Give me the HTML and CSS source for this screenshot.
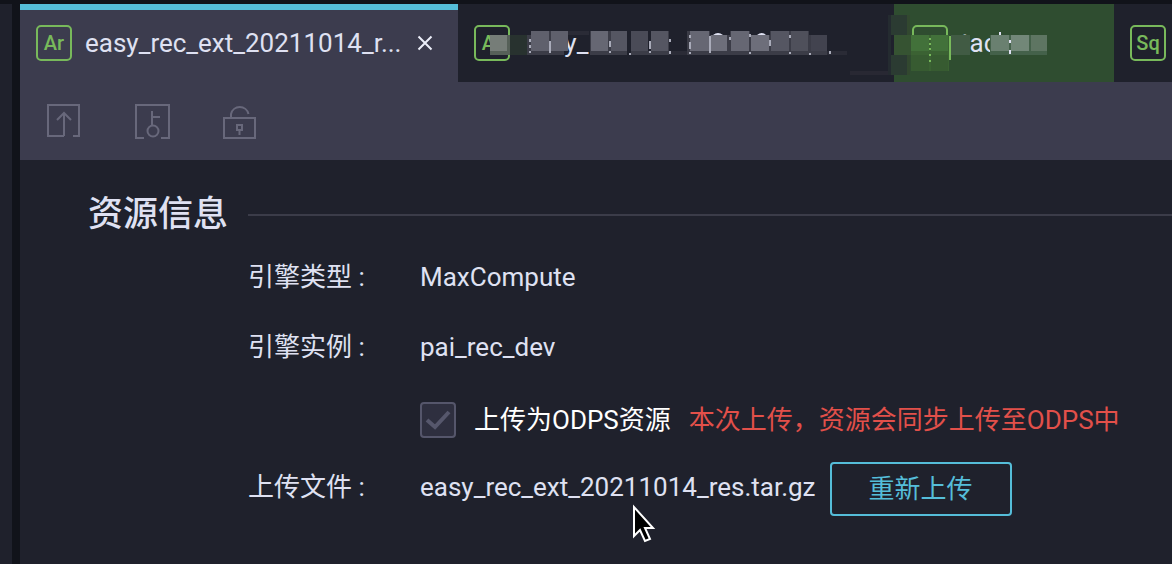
FILE: index.html
```html
<!DOCTYPE html>
<html lang="zh-CN">
<head>
<meta charset="utf-8">
<meta name="viewport" content="width=device-width, initial-scale=1">
<title>资源信息</title>
<link rel="stylesheet" href="styles.css">
</head>
<body class="app">
<aside class="rail"></aside>
<main class="workspace">
  <nav class="tabs" aria-label="文件">
    <div class="tab tab-active">
      <span class="badge">Ar</span>
      <span class="tab-name">easy_rec_ext_20211014_r...</span>
      <button class="close" type="button" aria-label="关闭">
        <svg width="16" height="16" viewBox="0 0 16 16"><path d="M1.5 1.5l13 13M14.5 1.5l-13 13"/></svg>
      </button>
    </div>
    <div class="tab tab-wide">
      <span class="badge">Ar</span>
      <span class="tab-name">easy_</span>
    </div>
    <div class="tab tab-green">
      <span class="badge"></span>
      <span class="tab-name">tac</span>
    </div>
    <div class="tab tab-last"><span class="badge">Sq</span></div>
    <svg class="mosaic" width="600" height="78" viewBox="458 4 600 78" shape-rendering="crispEdges" aria-hidden="true">
      <path fill="#767d78" d="M490 35h17v16h-17z"/>
      <path fill="#566058" d="M507 35h3v20h-3zM490 51h17v4h-17z"/>
      <path fill="#28322f" d="M510 35h17v20h-17z"/>
      <path fill="#1f212c" d="M523 31h40v4h-40zM527 35h36v24h-36z"/>
      <path fill="#3b3c47" d="M527 35h4v20h-4zM531 51h33v4h-33zM549 31h2v20h-2z"/>
      <path fill="#5f606c" d="M531 31h18v20h-18zM551 31h17v20h-17z"/>
      <path fill="#2a2b36" d="M568 31h21v4h-21zM669 51h19v4h-19zM827 51h20v4h-20z"/>
      <path fill="#3b3c47" d="M590 31h37v24h-37zM631 31h16v24h-16zM647 51h4v4h-4zM651 31h18v24h-18zM687 31h23v24h-23zM710 35h20v20h-20zM730 31h20v24h-20zM750 35h20v20h-20zM770 31h39v24h-39zM809 35h18v20h-18z"/>
      <path fill="#666773" d="M591 31h17v20h-17zM690 31h19v20h-19zM731 31h18v20h-18z"/>
      <path fill="#555662" d="M611 31h16v20h-16zM651 31h17v20h-17zM771 31h18v20h-18z"/>
      <path fill="#4a4b57" d="M631 31h17v20h-17z"/>
      <path fill="#42434f" d="M811 35h16v16h-16z"/>
      <path fill="#6d6e7a" d="M711 35h16v16h-16zM751 35h18v16h-18z"/>
      <path fill="#4f505b" d="M791 31h17v20h-17z"/>
      <path fill="#a9abb9" d="M529 39h2v3h-2zM529 45h2v3h-2zM529 51h2v2h-2zM549 41h2v12h-2zM609 41h2v6h-2zM609 51h2v2h-2zM629 53h2v2h-2zM649 41h2v8h-2zM649 51h2v2h-2zM669 39h2v3h-2zM669 51h2v3h-2zM689 35h2v3h-2zM689 42h2v7h-2zM689 52h2v2h-2zM709 36h2v17h-2zM729 37h2v3h-2zM749 34h2v3h-2zM749 52h2v2h-2zM769 40h2v6h-2zM789 35h2v3h-2zM789 52h2v2h-2zM809 53h2v2h-2zM829 51h2v3h-2z"/>
      <path fill="#dfe1f2" d="M713 35q5-4 10 0zM757 35q5-4 9 0z" shape-rendering="auto"/>
      <path fill="#282833" d="M850 71h38v4h-38z"/>
      <path fill="#242b30" d="M888 15h3v60h-3z"/>
      <path fill="#2b3b32" d="M891 15h16v20h-16zM891 55h16v20h-16z"/>
      <path fill="#32482f" d="M907 15h3v20h-3zM907 55h3v20h-3z"/>
      <path fill="#365332" d="M894 35h17v20h-17z"/>
      <path fill="#3b6233" d="M911 35h38v36h-38z"/>
      <path fill="#42713a" d="M911 35h18v16h-18zM931 35h17v16h-17z"/>
      <path fill="#375b31" d="M911 55h18v16h-18zM931 55h17v16h-17z"/>
      <path fill="#78b95b" d="M929 38h2v2h-2zM929 43h2v2h-2zM929 48h2v2h-2zM929 54h2v2h-2zM929 60h2v2h-2zM949 36h2v24h-2z"/>
      <path fill="#415b44" d="M951 35h19v20h-19z"/>
      <path fill="#44614a" d="M990 35h57v20h-57z"/>
      <path fill="#6a8070" d="M991 35h18v16h-18z"/>
      <path fill="#728778" d="M1011 35h18v16h-18z"/>
      <path fill="#5e7562" d="M1031 35h16v16h-16z"/>
      <path fill="#dfe1f2" d="M999 32h2v3h-2zM1009 40h2v3h-2zM1009 50h2v4h-2z"/>
    </svg>
  </nav>
  <div class="toolbar">
    <button class="tool" type="button" aria-label="提交">
      <svg width="36" height="38" viewBox="0 0 36 38"><path d="M18 34H2V3h31v31h-6M18 34V11M11 18l7-7 7 7"/></svg>
    </button>
    <button class="tool" type="button" aria-label="提交并解锁">
      <svg width="36" height="38" viewBox="0 0 36 38"><path d="M10 36H2V3h33v33h-8M18 9v15M18 15h8"/><circle cx="19" cy="29" r="5.5"/></svg>
    </button>
    <button class="tool" type="button" aria-label="锁定">
      <svg width="36" height="38" viewBox="0 0 36 38"><path d="M2 16h31v20H2zM9 16v-4a9 9 0 0 1 17.500 0M15 23h5v5h-5zM17.500 28v5"/></svg>
    </button>
  </div>
  <section class="panel">
    <header class="heading"><h1 class="title">资源信息</h1></header>
    <div class="row"><span class="label">引擎类型 :</span><span>MaxCompute</span></div>
    <div class="row"><span class="label">引擎实例 :</span><span>pai_rec_dev</span></div>
    <div class="row">
      <span class="label"></span>
      <div class="option">
        <span class="check">
          <input class="check-box" type="checkbox" id="odps" checked disabled>
          <svg class="check-mark" width="26" height="22" viewBox="0 0 26 22"><path d="M2 11l8 7L24 3"/></svg>
        </span>
        <label class="option-name" for="odps">上传为ODPS资源</label>
        <span class="warning">本次上传，资源会同步上传至ODPS中</span>
      </div>
    </div>
    <div class="row">
      <span class="label">上传文件 :</span>
      <div class="file">
        <span>easy_rec_ext_20211014_res.tar.gz</span>
        <button class="upload" type="button">重新上传</button>
        <svg class="pointer" width="28" height="40" viewBox="0 0 28 40" aria-hidden="true"><path d="M3 3v29l6-6 5 11 5-2-5-11h8z"/></svg>
      </div>
    </div>
  </section>
</main>
</body>
</html>
```
FILE: styles.css
```css
* { box-sizing: border-box; }
.app {
  margin: 0;
  min-height: 100vh;
  display: flex;
  gap: 8px;
  padding-top: 4px;
  overflow-x: hidden;
  background: #11131a;
  color: #dfe1f2;
  font: 26px/36px Roboto, "Noto Sans CJK SC", sans-serif;
}
button { font: inherit; color: inherit; background: none; border: 0; padding: 0; }
svg { display: block; fill: none; stroke-width: 2; }
.rail { flex: 0 0 12px; background: #1f212c; }
.workspace { flex: 1; min-width: 0; background: #1f212c; }

.tabs { position: relative; display: flex; height: 78px; overflow: hidden; }
.tab { flex: none; display: flex; align-items: center; padding: 0 16px; }
.tab-active { width: 438px; background: #3c3c4e; box-shadow: inset 0 6px #55bdd9; }
.tab-wide { width: 436px; }
.tab-green { width: 220px; padding-left: 18px; background: #2f4d30; }
.badge {
  flex: none;
  width: 36px;
  height: 36px;
  border: 2px solid #78b95b;
  border-radius: 5px;
  color: #78b95b;
  font-size: 20px;
  font-weight: 500;
  line-height: 32px;
  text-align: center;
}
.tab-name { margin-left: 13px; white-space: nowrap; }
.close { margin-left: 16px; }
.close svg { stroke: #eceefa; }
.mosaic { position: absolute; left: 438px; top: 0; }
.mosaic path { stroke: none; }

.toolbar { display: flex; align-items: center; gap: 52px; height: 78px; padding: 0 26px; background: #3c3c4e; }
.tool svg { stroke: #68687b; }

.panel { padding: 28px 0 8px 68px; }
.heading { display: flex; align-items: center; gap: 20px; height: 54px; }
.heading::after { content: ""; flex: 1; height: 2px; background: #3b3c49; }
.title { margin: 0; font-size: 35px; font-weight: 500; line-height: 52px; }
.row { display: grid; grid-template-columns: 332px 1fr; align-items: center; min-height: 70px; white-space: nowrap; }
.label { padding-left: 160px; }
.option { display: flex; align-items: center; padding-top: 6px; }
.check { display: grid; place-items: center; }
.check-box, .check-mark { grid-area: 1 / 1; }
.check-box {
  appearance: none;
  width: 36px;
  height: 36px;
  margin: 0;
  border: 2px solid #55566b;
  border-radius: 4px;
  background: #2e2f3f;
}
.check-mark { z-index: 1; stroke: #56576c; stroke-width: 4; pointer-events: none; }
.option-name { margin-left: 18px; color: #fff; }
.warning { margin-left: 18px; color: #e2504a; }
.file { position: relative; display: flex; align-items: center; gap: 14px; }
.upload { width: 182px; height: 54px; margin: 4px 0 0; border: 2px solid #55bdd9; border-radius: 4px; color: #55bdd9; }
.pointer { position: absolute; left: 211px; top: 46px; }
.pointer path { fill: #000; stroke: #fff; }
```
